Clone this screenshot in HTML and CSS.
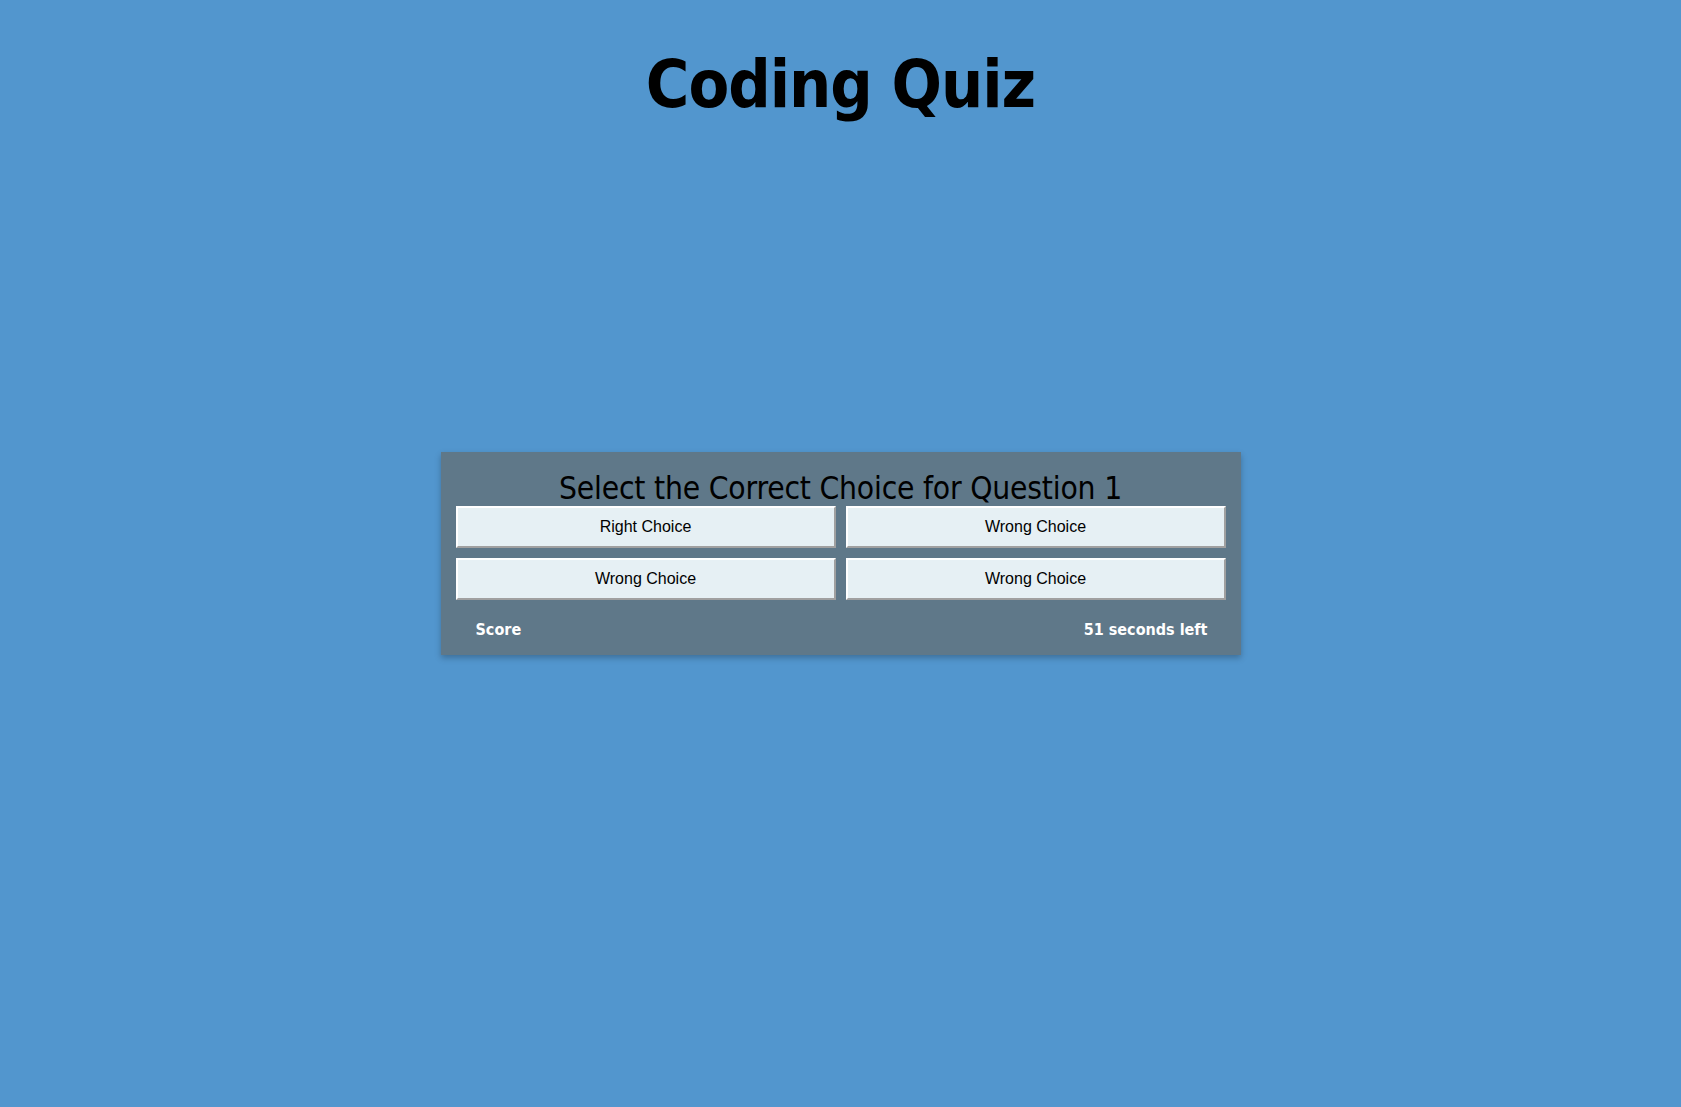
FILE: index.html
```html
<!DOCTYPE html>
<html lang="en">
<head>
<meta charset="utf-8">
<title>Coding Quiz</title>
<link rel="stylesheet" href="styles.css">
</head>
<body>
<header class="top">
  <h1 class="title">Coding Quiz</h1>
</header>
<main class="stage">
  <section class="card">
    <h2 class="question">Select the Correct Choice for Question 1</h2>
    <div class="choices">
      <button class="choice">Right Choice</button>
      <button class="choice">Wrong Choice</button>
      <button class="choice">Wrong Choice</button>
      <button class="choice">Wrong Choice</button>
    </div>
    <div class="status">
      <span class="score">Score</span>
      <span class="timer">51 seconds left</span>
    </div>
  </section>
</main>
</body>
</html>
```
FILE: styles.css
```css
html, body {
  margin: 0;
  padding: 0;
  height: 100%;
}
body {
  background: #5296ce;
  font-family: "DejaVu Sans Condensed", "DejaVu Sans", sans-serif;
  color: #000;
}
.top {
  display: flex;
  justify-content: center;
  padding-top: 46px;
}
.title {
  margin: 0;
  font-size: 66px;
  font-weight: bold;
  line-height: normal;
  letter-spacing: -1px;
}
.stage {
  display: flex;
  justify-content: center;
  padding-top: 329px;
}
.card {
  width: 800px;
  box-sizing: border-box;
  background: #5f7889;
  padding: 18px 15px 16px;
  box-shadow: 0 3px 6px rgba(0, 0, 0, 0.25);
}
.question {
  margin: 0;
  text-align: center;
  font-size: 31.5px;
  font-weight: normal;
  line-height: normal;
  letter-spacing: -0.2px;
}
.choices {
  display: grid;
  grid-template-columns: 1fr 1fr;
  gap: 10px;
}
.choice {
  height: 42px;
  background: #e6f0f4;
  border-style: solid;
  border-width: 2px;
  border-color: #ffffff #a0a0a0 #a0a0a0 #ffffff;
  font-family: "Liberation Sans", Arial, sans-serif;
  font-size: 16px;
  color: #000;
  padding: 0;
}
.status {
  display: flex;
  justify-content: space-between;
  margin-top: 20px;
  padding: 0 18px 0 20px;
  color: #fff;
  font-weight: bold;
  font-size: 16px;
}
```
